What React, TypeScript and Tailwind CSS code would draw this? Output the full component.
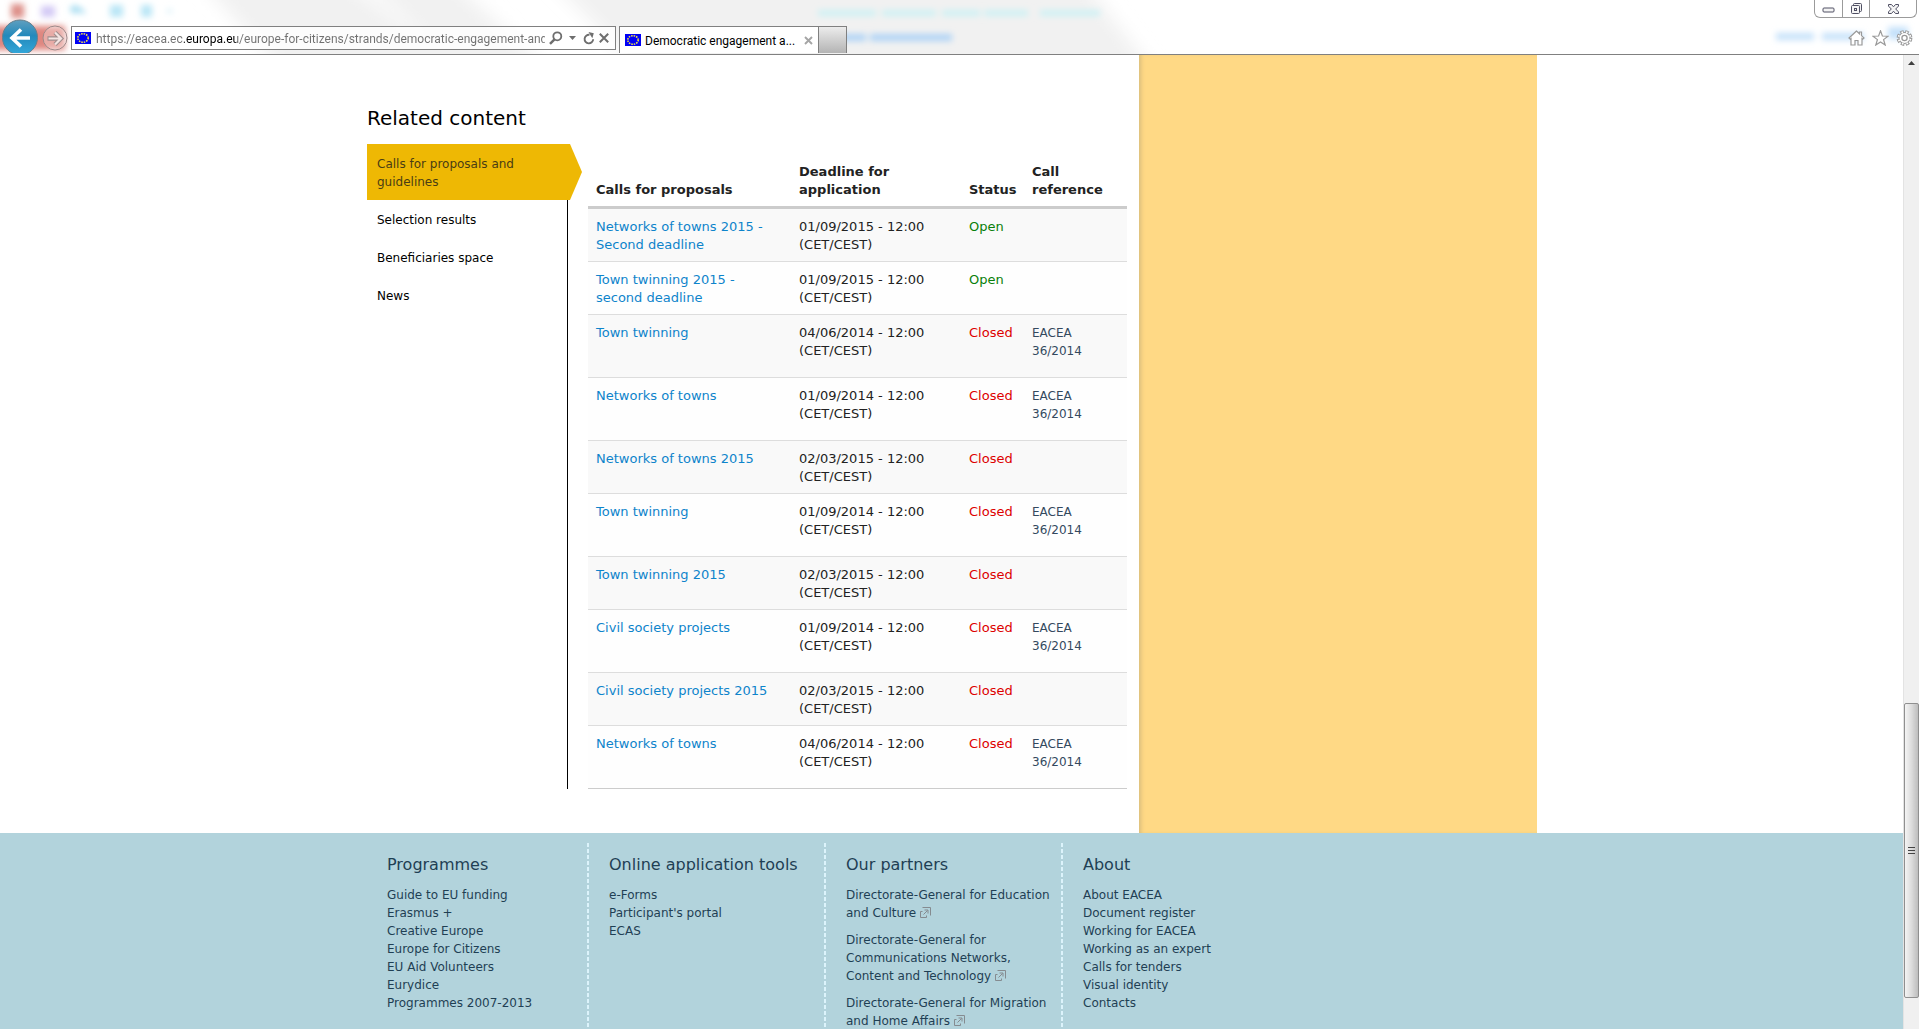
import type { ReactNode } from "react";

type Call = {
    title: string;
    deadline: string;
    open?: boolean;
    reference?: boolean;
};

const calls: Call[] = [
    { title: "Networks of towns 2015 - Second deadline", deadline: "01/09/2015", open: true },
    { title: "Town twinning 2015 - second deadline", deadline: "01/09/2015", open: true },
    { title: "Town twinning", deadline: "04/06/2014", reference: true },
    { title: "Networks of towns", deadline: "01/09/2014", reference: true },
    { title: "Networks of towns 2015", deadline: "02/03/2015" },
    { title: "Town twinning", deadline: "01/09/2014", reference: true },
    { title: "Town twinning 2015", deadline: "02/03/2015" },
    { title: "Civil society projects", deadline: "01/09/2014", reference: true },
    { title: "Civil society projects 2015", deadline: "02/03/2015" },
    { title: "Networks of towns", deadline: "04/06/2014", reference: true },
];

const programmes = [
    "Guide to EU funding",
    "Erasmus +",
    "Creative Europe",
    "Europe for Citizens",
    "EU Aid Volunteers",
    "Eurydice",
    "Programmes 2007-2013",
];

const tools = ["e-Forms", "Participant's portal", "ECAS"];

const partners = [
    "Directorate-General for Education and Culture",
    "Directorate-General for Communications Networks, Content and Technology",
    "Directorate-General for Migration and Home Affairs",
];

const about = [
    "About EACEA",
    "Document register",
    "Working for EACEA",
    "Working as an expert",
    "Calls for tenders",
    "Visual identity",
    "Contacts",
];

function EuFlag() {
    return (
        <svg width="16" height="12" viewBox="0 0 16 12" className="shrink-0" aria-hidden="true">
            <rect width="16" height="12" fill="#0000f5" />
            <ellipse cx="8" cy="6" rx="5.2" ry="4.3" fill="none" stroke="#ffef3a" strokeWidth="1.5" strokeDasharray="1.5 1" />
        </svg>
    );
}

// Colours of the window behind, seen through the glass title bar
function GlassBackdrop() {
    return (
        <svg className="absolute inset-0 h-full w-full" aria-hidden="true">
            <defs>
                <filter id="soft" filterUnits="userSpaceOnUse" x="-40" y="-40" width="2000" height="140">
                    <feGaussianBlur stdDeviation="3" />
                </filter>
                <filter id="softer" filterUnits="userSpaceOnUse" x="-40" y="-60" width="2000" height="180">
                    <feGaussianBlur stdDeviation="9" />
                </filter>
            </defs>
            <g filter="url(#softer)" fill="#f1f1f1">
                <polygon points="190,-30 330,-30 480,80 290,80" />
                <polygon points="355,-30 440,-30 560,80 470,80" />
                <polygon points="540,-30 1075,-30 1160,80 650,80" />
            </g>
            <g filter="url(#soft)">
                <rect x="-10" y="26" width="75" height="24" fill="#df8780" />
                <rect x="11" y="4" width="13" height="14" fill="#dd8f88" />
                <rect x="41" y="6" width="14" height="11" fill="#d3c9f5" />
                <path d="M69 9l7-5v3c6 0 9 3 9 8-3-3-5-3-9-3v3z" fill="#9dd9f0" />
                <rect x="110" y="5" width="13" height="12" fill="#b9e6f6" />
                <rect x="141" y="5" width="11" height="12" fill="#b9e6f6" />
                <rect x="167" y="9" width="5" height="4" fill="#d5f0f8" />
                <g fill="#cdf1f4">
                    <rect x="818" y="10" width="58" height="6" />
                    <rect x="882" y="10" width="54" height="6" />
                    <rect x="942" y="10" width="38" height="6" />
                    <rect x="984" y="10" width="44" height="6" />
                    <rect x="1040" y="10" width="60" height="6" />
                </g>
                <g fill="#aed3f6">
                    <rect x="828" y="34" width="38" height="7" />
                    <rect x="870" y="34" width="82" height="7" />
                </g>
                <g fill="#c4e1fa">
                    <rect x="1776" y="33" width="38" height="7" />
                    <rect x="1822" y="33" width="42" height="7" />
                    <rect x="1888" y="27" width="20" height="12" />
                </g>
            </g>
        </svg>
    );
}

function WindowButtons() {
    return (
        <div className="relative flex h-[18px] w-[103px] shrink-0 rounded-b-md border border-t-0 border-[#9b9b9b] bg-white/70">
            <button aria-label="Minimise" className="flex w-7 items-end justify-center border-r border-[#9b9b9b] pb-1">
                <svg width="13" height="6" viewBox="0 0 13 6">
                    <rect x="1" y="1" width="11" height="4" rx="1" fill="#f4f4f4" stroke="#505064" />
                </svg>
            </button>
            <button aria-label="Restore" className="flex w-[27px] items-center justify-center border-r border-[#9b9b9b]">
                <svg width="13" height="13" viewBox="0 0 13 13" fill="#f4f4f4" stroke="#505064">
                    <rect x="3.5" y="1.5" width="8" height="8" rx="1" />
                    <rect x="1.5" y="3.5" width="8" height="8" rx="1" />
                    <rect x="4.5" y="6.5" width="2" height="2" />
                </svg>
            </button>
            <button aria-label="Close" className="flex flex-1 items-center justify-center">
                <svg width="13" height="12" viewBox="0 0 13 12" fill="#f4f4f4" stroke="#505064">
                    <path d="M1.5 1.5h3l2 2.3 2-2.3h3v1.6L8.7 6l2.8 2.9v1.6h-3l-2-2.3-2 2.3h-3V8.9L4.3 6 1.5 3.1z" />
                </svg>
            </button>
        </div>
    );
}

function AddressBar() {
    return (
        <div className="flex h-6 w-[545px] items-center border border-[#808080] bg-white/80 pl-[3px]">
            <EuFlag />
            <input
                aria-label="Address"
                readOnly
                defaultValue="https://eacea.ec.europa.eu/europe-for-citizens/strands/democratic-engagement-and-civic-participation"
                className="ml-[5px] mr-1 w-0 flex-1 bg-[linear-gradient(90deg,#707070_88px,#000_88px,#000_140px,#707070_140px)] bg-clip-text pt-px font-[Roboto,sans-serif] text-xs text-transparent outline-none"
            />
            <button aria-label="Search" className="flex items-center">
                <svg width="14" height="14" viewBox="0 0 14 14" fill="none" stroke="#6e6e6e">
                    <circle cx="8.3" cy="5.3" r="4" strokeWidth="1.8" />
                    <path d="M5.5 8.3L1 12.8" strokeWidth="2.4" />
                </svg>
            </button>
            <button aria-label="Show addresses" className="ml-1.5">
                <svg width="7" height="4" viewBox="0 0 7 4">
                    <path d="M0 0h7L3.5 4z" fill="#6e6e6e" />
                </svg>
            </button>
            <button aria-label="Refresh" className="ml-[7px]">
                <svg width="12" height="13" viewBox="0 0 12 13">
                    <path d="M10.2 7.3a4.3 4.3 0 1 1-3.7-4.5" fill="none" stroke="#6e6e6e" strokeWidth="1.9" />
                    <path d="M5.5 0l5.3 1.2-1.5 5z" fill="#6e6e6e" />
                </svg>
            </button>
            <button aria-label="Stop" className="ml-1 mr-1.5">
                <svg width="10" height="10" viewBox="0 0 10 10">
                    <path d="M.8.8l8.4 8.4M9.2.8L.8 9.2" stroke="#6e6e6e" strokeWidth="2" />
                </svg>
            </button>
        </div>
    );
}

function BrowserChrome() {
    return (
        <header className="relative shrink-0 overflow-hidden border-b border-[#808080] bg-white">
            <GlassBackdrop />
            <div className="relative flex h-[54px]">
                <div className="mt-[19px] flex h-[34px] shrink-0 overflow-hidden">
                    <button aria-label="Back" className="ml-px h-[37px]">
                        <svg width="38" height="37" viewBox="0 0 38 37">
                            <defs>
                                <linearGradient id="back" x1="0" y1="0" x2="0" y2="1">
                                    <stop offset="0" stopColor="#5f9fbf" />
                                    <stop offset=".45" stopColor="#2389bb" />
                                    <stop offset="1" stopColor="#35a9db" />
                                </linearGradient>
                            </defs>
                            <circle cx="19" cy="18.5" r="17.5" fill="url(#back)" stroke="#667f8c" />
                            <path d="M29 19H11M20 10.5L11 19l9 8.500" fill="none" stroke="#fff" strokeWidth="3.6" />
                        </svg>
                    </button>
                    <button aria-label="Forward" className="ml-[3px] mt-1.5 h-[26px]">
                        <svg width="26" height="26" viewBox="0 0 26 26" fill="none">
                            <circle cx="13" cy="13" r="12" fill="#fff" fillOpacity=".3" stroke="#9d8a8a" />
                            <path d="M5.500 13.500H19M13 7.500l6 6-6 6" stroke="#a08e8e" strokeWidth="4.400" />
                            <path d="M6.500 13.500H19M13 7.500l6 6-6 6" stroke="#f3e4e2" strokeWidth="2.200" />
                        </svg>
                    </button>
                </div>
                <div className="ml-[3px] mt-[26px]">
                    <AddressBar />
                </div>
                <div className="ml-[3px] mt-[26px] flex h-[27px] w-[200px] items-center border border-b-0 border-[#808080] bg-white px-[5px] font-[Roboto,sans-serif] text-xs text-black">
                    <EuFlag />
                    <span className="ml-1 flex-1 whitespace-nowrap pt-px">Democratic engagement a...</span>
                    <button aria-label="Close tab">
                        <svg width="9" height="9" viewBox="0 0 9 9">
                            <path d="M1 1l7 7M8 1L1 8" stroke="#a5a5a5" strokeWidth="1.9" />
                        </svg>
                    </button>
                </div>
                <button
                    aria-label="New tab"
                    className="mt-[26px] h-[27px] w-7 border border-b-0 border-l-0 border-[#808080] bg-linear-to-b from-[#ececec] to-[#b4b4b4]"
                />
                <div className="ml-auto flex flex-col items-end pr-0.5">
                    <WindowButtons />
                    <div className="mr-1 mt-3 flex items-center gap-[7px]">
                        <button aria-label="Home">
                            <svg width="17" height="16" viewBox="0 0 17 16" fill="#fff" stroke="#999" strokeWidth="1.2">
                                <path d="M8.5 1L1 8l1.3 1.2.7-.6V15h4v-4.500h3V15h4V8.600l.7.600L16 8l-2.500-2.400V2h-2v1.800z" />
                            </svg>
                        </button>
                        <button aria-label="Favourites">
                            <svg width="17" height="16" viewBox="0 0 17 16" fill="#fff" stroke="#999" strokeWidth="1.2">
                                <path d="M8.5 .8l1.900 5.200 5.600.2-4.400 3.400 1.600 5.400-4.700-3.100L3.800 15l1.600-5.400L1 6.200l5.600-.2z" />
                            </svg>
                        </button>
                        <button aria-label="Tools">
                            <svg width="17" height="16" viewBox="0 0 17 16" fill="none">
                                <circle cx="8.5" cy="8" r="6.3" stroke="#999" strokeWidth="3.2" strokeDasharray="3.350 1.598" />
                                <circle cx="8.5" cy="8" r="5.5" fill="#fff" stroke="#999" strokeWidth="1.1" />
                                <circle cx="8.5" cy="8" r="6" stroke="#fff" strokeWidth="1.8" strokeDasharray="1.500 3.212" strokeDashoffset="-.9" />
                                <circle cx="8.5" cy="8" r="2.6" stroke="#999" strokeWidth="1.3" />
                            </svg>
                        </button>
                    </div>
                </div>
            </div>
        </header>
    );
}

function Scrollbar() {
    return (
        <div className="flex w-4 shrink-0 flex-col border-l border-[#e3e3e3] bg-[#f0f0f0]">
            <button aria-label="Scroll up" className="flex h-4 items-center justify-center">
                <svg width="7" height="4" viewBox="0 0 7 4">
                    <path d="M0 4h7L3.5 0z" fill="#404040" />
                </svg>
            </button>
            <div className="grow-[633] basis-0" />
            <div className="flex grow-[294] basis-0 flex-col items-center justify-center gap-0.5 rounded-xs border border-[#8f8f8f] bg-linear-to-r from-[#f4f4f4] via-[#dcdcdc] to-[#bdbdbd]">
                <span className="h-px w-[7px] bg-[#444]" />
                <span className="h-px w-[7px] bg-[#444]" />
                <span className="h-px w-[7px] bg-[#444]" />
            </div>
            <div className="grow-[31] basis-0" />
        </div>
    );
}

function RelatedNav() {
    return (
        <nav className="flex w-[201px] shrink-0 flex-col border-r border-black text-xs leading-[18px] text-black">
            <a
                href="#calls"
                className="relative -mr-[15px] bg-[#eeb804] pb-[9px] pl-2.5 pr-14 pt-[11px] text-[#4a3d14] [clip-path:polygon(0_0,203px_0,100%_50%,203px_100%,0_100%)]"
            >
                Calls for proposals and guidelines
            </a>
            <a href="#results" className="px-2.5 pb-[9px] pt-[11px]">Selection results</a>
            <a href="#beneficiaries" className="px-2.5 pb-[9px] pt-[11px]">Beneficiaries space</a>
            <a href="#news" className="px-2.5 pb-[9px] pt-[11px]">News</a>
        </nav>
    );
}

function CallsTable() {
    return (
        <table className="mt-2.5 w-full table-fixed border-collapse text-left text-[13px] leading-[18px] text-[#222]">
            <colgroup>
                <col className="w-[203px]" />
                <col className="w-[170px]" />
                <col className="w-[63px]" />
                <col />
            </colgroup>
            <thead>
                <tr className="border-b-3 border-[#ccc] align-bottom">
                    <th className="px-2 pb-[7px] pt-[9px]">Calls for proposals</th>
                    <th className="pb-[7px] pl-2 pr-14 pt-[9px]">Deadline for application</th>
                    <th className="pb-[7px] pl-2 pt-[9px]">Status</th>
                    <th className="px-2 pb-[7px] pt-[9px]">Call reference</th>
                </tr>
            </thead>
            <tbody>
                {calls.map((call, i) => (
                    <tr key={i} className="border-b border-[#ddd] align-top odd:bg-[#f9f9f9] even:bg-[#fefefe] last:border-[#ccc]">
                        <td className="px-2 pb-[7px] pt-[9px]">
                            <a href="#call" className="text-[#0e84cb]">{call.title}</a>
                        </td>
                        <td className="px-2 pb-[7px] pt-[9px]">
                            {call.deadline} - 12:00
                            <br />
                            (CET/CEST)
                        </td>
                        <td className={call.open ? "pb-[7px] pl-2 pt-[9px] text-[#0a800a]" : "pb-[7px] pl-2 pt-[9px] text-[#dd0000]"}>
                            {call.open ? "Open" : "Closed"}
                        </td>
                        <td className="px-2 pb-[7px] pt-[9px] text-xs leading-[18px] text-[#34495e]">
                            {call.reference && (
                                <p className="mb-2.5">
                                    EACEA
                                    <br />
                                    36/2014
                                </p>
                            )}
                        </td>
                    </tr>
                ))}
            </tbody>
        </table>
    );
}

function ExternalIcon() {
    return (
        <svg width="11" height="11" viewBox="0 0 11 11" className="ml-1 inline-block align-[-1px]" fill="none" stroke="#858b90" aria-hidden="true">
            <path d="M2.500 .5h8V8.500M2.500 4.500h-2v6h6v-2M3.500 7.500l4-4M4.500 3h3.500v3.500" />
        </svg>
    );
}

function FooterColumn({ title, divider, children }: { title: string; divider?: boolean; children: ReactNode }) {
    return (
        <section className="flex">
            {divider && (
                <div className="w-0.5 shrink-0 bg-[repeating-linear-gradient(180deg,#dcf3fb_0,#dcf3fb_4px,transparent_4px,transparent_6px)]" />
            )}
            <div className="pl-5 pt-[11px]">
                <h3 className="text-base leading-[22px]">{title}</h3>
                <div className="mt-2.5 text-xs leading-[18px]">{children}</div>
            </div>
        </section>
    );
}

function LinkList({ items }: { items: string[] }) {
    return (
        <ul>
            {items.map((item) => (
                <li key={item}>
                    <a href="#footer">{item}</a>
                </li>
            ))}
        </ul>
    );
}

function Footer() {
    return (
        <footer id="footer" className="flex flex-1 flex-col bg-[#b2d3dc] pt-2.5 text-[#1f3f54]">
            <div className="mx-auto grid w-full max-w-[1171px] flex-1 grid-cols-[220px_237px_237px_1fr] pl-px">
                <FooterColumn title="Programmes">
                    <LinkList items={programmes} />
                </FooterColumn>
                <FooterColumn title="Online application tools" divider>
                    <LinkList items={tools} />
                </FooterColumn>
                <FooterColumn title="Our partners" divider>
                    <ul className="flex flex-col gap-[9px]">
                        {partners.map((partner) => (
                            <li key={partner}>
                                <a href="#footer">
                                    {partner}
                                    <ExternalIcon />
                                </a>
                            </li>
                        ))}
                    </ul>
                </FooterColumn>
                <FooterColumn title="About" divider>
                    <LinkList items={about} />
                </FooterColumn>
            </div>
        </footer>
    );
}

export default function App() {
    return (
        <div className="flex h-screen flex-col overflow-hidden bg-white font-['DejaVu_Sans',sans-serif]">
            <BrowserChrome />
            <div className="flex min-h-0 flex-1">
                <div className="flex flex-1 flex-col overflow-hidden">
                    <main className="mx-auto flex w-full max-w-[1171px] shrink-0 pl-px">
                        <div className="flex-1 pb-11 pr-3 pt-12">
                            <h2 className="text-xl leading-[30px] text-black">Related content</h2>
                            <div className="mt-[11px] flex gap-5">
                                <RelatedNav />
                                <div className="flex-1">
                                    <CallsTable />
                                </div>
                            </div>
                        </div>
                        <aside className="w-[398px] shrink-0 bg-[#ffd985] shadow-[inset_4px_0_4px_-2px_#d9bd7c]" />
                    </main>
                    <Footer />
                </div>
                <Scrollbar />
            </div>
        </div>
    );
}
